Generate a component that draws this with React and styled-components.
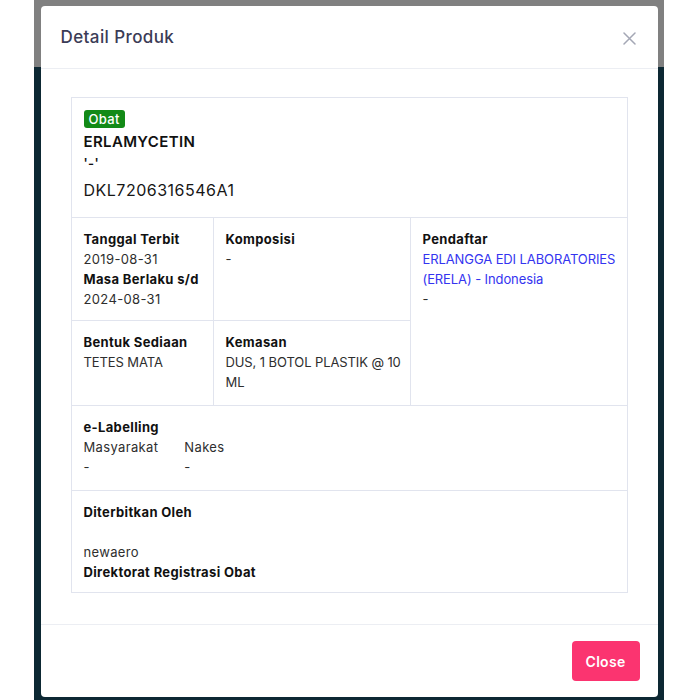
import React from 'react'
import styled, { createGlobalStyle } from 'styled-components'

const GlobalStyle = createGlobalStyle`
  html, body {
    margin: 0;
    padding: 0;
    background: #ffffff;
    font-family: Inter, "Open Sans", sans-serif;
  }
`

const Backdrop = styled.div`
  margin-left: 34px;
  width: 630px;
  height: 700px;
  background: linear-gradient(to bottom, #808080 0, #808080 67px, #0d2833 67px, #0d2833 100%);
  overflow: hidden;
`

const Modal = styled.div`
  width: 617px;
  height: 691px;
  margin: 6px auto 0;
  background: #fff;
  border-radius: 4px;
  display: flex;
  flex-direction: column;
`

const Header = styled.div`
  height: 62px;
  padding: 0 20px;
  display: flex;
  align-items: center;
  justify-content: space-between;
  border-bottom: 1px solid #eceef3;
`

const Title = styled.h5`
  margin: 0;
  font-size: 17px;
  font-weight: 500;
  color: #3b3c56;
  letter-spacing: 0.4px;
`

const CloseX = styled.button`
  border: 0;
  background: none;
  padding: 0;
  margin-right: 2px;
  margin-top: 3px;
  display: flex;
  cursor: pointer;
`

const Body = styled.div`
  flex: 1;
  padding: 28px 30px 30px;
`

const Card = styled.div`
  display: grid;
  grid-template-columns: 142px 197px 1fr;
  grid-template-rows: 120px 103px 85px 85px 1fr;
  height: 496px;
  border: 1px solid #e1e4ee;
  box-sizing: border-box;
`

const Cell = styled.div`
  padding: 11px 8px 12px 12px;
  font-size: 13px;
  line-height: 20px;
  letter-spacing: 0.35px;
  color: #2e2e2e;
  grid-column: ${p => p.$col || 'auto'};
  grid-row: ${p => p.$row || 'auto'};
  border-right: ${p => (p.$last ? '0' : '1px solid #e1e4ee')};
  border-bottom: ${p => (p.$bottom ? '0' : '1px solid #e1e4ee')};
`

const Badge = styled.span`
  display: inline-block;
  background: #138a17;
  color: #fff;
  font-size: 13px;
  font-weight: 500;
  line-height: 18px;
  padding: 0 5px;
  border-radius: 3px;
  margin-top: 1px;
`

const Name = styled.div`
  font-size: 15px;
  font-weight: 600;
  color: #111;
  line-height: 22px;
  margin-top: 2px;
`

const Sub = styled.div`
  font-size: 13px;
  font-weight: 600;
  color: #111;
  line-height: 20px;
`

const RegNo = styled.div`
  font-size: 16px;
  color: #161616;
  line-height: 24px;
  margin-top: 5px;
  letter-spacing: 0.5px;
`

const Label = styled.div`
  font-weight: 700;
  color: #111;
`

const Value = styled.div`
  color: ${p => (p.$link ? '#3434f0' : 'inherit')};
  letter-spacing: ${p => (p.$caps ? '-0.1px' : 'inherit')};
`

const Pair = styled.div`
  display: flex;
  gap: 26px;
`

const Spacer = styled.div`
  height: 20px;
`

const Footer = styled.div`
  height: 73px;
  border-top: 1px solid #eceef3;
  display: flex;
  justify-content: flex-end;
  align-items: flex-start;
  padding: 16px 18px 0;
  box-sizing: border-box;
`

const Button = styled.button`
  height: 40px;
  padding: 0 14px;
  border: 0;
  border-radius: 4px;
  background: #fb3470;
  color: #fff;
  font-family: inherit;
  font-size: 14px;
  font-weight: 600;
  letter-spacing: 0.3px;
  cursor: pointer;
`

const App = () => {
  return (
    <React.Fragment>
      <GlobalStyle />
      <Backdrop>
        <Modal>
          <Header>
            <Title>Detail Produk</Title>
            <CloseX aria-label="close">
              <svg width="13" height="13" viewBox="0 0 13 13">
                <path d="M1 1L12 12M12 1L1 12" stroke="#a4a7b5" strokeWidth="1.5" strokeLinecap="round" />
              </svg>
            </CloseX>
          </Header>
          <Body>
            <Card>
              <Cell $col="1 / 4" $row="1" $last>
                <Badge>Obat</Badge>
                <Name>ERLAMYCETIN</Name>
                <Sub>'-'</Sub>
                <RegNo>DKL7206316546A1</RegNo>
              </Cell>
              <Cell $col="1" $row="2">
                <Label>Tanggal Terbit</Label>
                <Value>2019-08-31</Value>
                <Label>Masa Berlaku s/d</Label>
                <Value>2024-08-31</Value>
              </Cell>
              <Cell $col="2" $row="2">
                <Label>Komposisi</Label>
                <Value>-</Value>
              </Cell>
              <Cell $col="3" $row="2 / 4" $last>
                <Label>Pendaftar</Label>
                <Value $link $caps>ERLANGGA EDI LABORATORIES (ERELA) - Indonesia</Value>
                <Value>-</Value>
              </Cell>
              <Cell $col="1" $row="3">
                <Label>Bentuk Sediaan</Label>
                <Value $caps>TETES MATA</Value>
              </Cell>
              <Cell $col="2" $row="3">
                <Label>Kemasan</Label>
                <Value $caps>DUS, 1 BOTOL PLASTIK @ 10 ML</Value>
              </Cell>
              <Cell $col="1 / 4" $row="4" $last>
                <Label>e-Labelling</Label>
                <Pair>
                  <div>Masyarakat<br />-</div>
                  <div>Nakes<br />-</div>
                </Pair>
              </Cell>
              <Cell $col="1 / 4" $row="5" $last $bottom>
                <Label>Diterbitkan Oleh</Label>
                <Spacer />
                <Value>newaero</Value>
                <Label>Direktorat Registrasi Obat</Label>
              </Cell>
            </Card>
          </Body>
          <Footer>
            <Button>Close</Button>
          </Footer>
        </Modal>
      </Backdrop>
    </React.Fragment>
  )
}

export default App
